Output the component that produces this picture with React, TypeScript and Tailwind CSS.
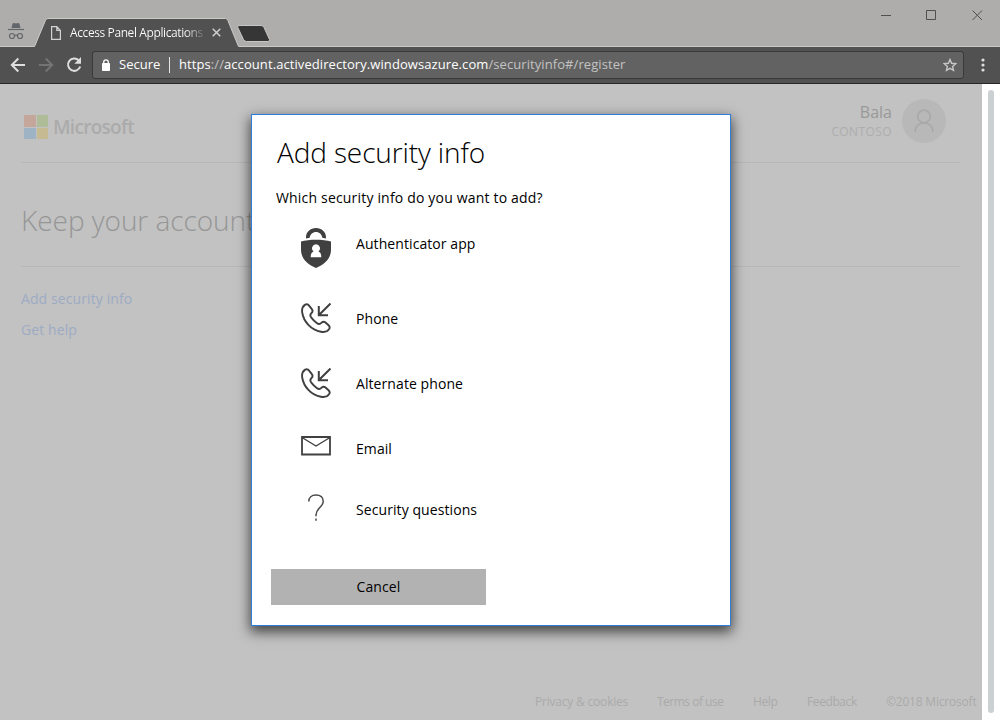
import type { ReactNode } from "react";

function IncognitoIcon() {
  return (
    <svg className="mt-[23px] h-[17px] w-4 shrink-0" viewBox="0 0 16 17" fill="none">
      <path d="M3.5 5 4.6.6 6 0l2 .6L10 0l1.4.6L12.500 5Z" fill="#62656a" />
      <path d="M0 6.500h16" stroke="#62656a" strokeWidth="1.200" />
      <circle cx="4" cy="13" r="2.500" stroke="#62656a" strokeWidth="1.200" />
      <circle cx="12" cy="13" r="2.500" stroke="#62656a" strokeWidth="1.200" />
      <path d="M6.500 12.600q1.500-1 3 0" stroke="#62656a" strokeWidth="1.200" />
    </svg>
  );
}

function TitleBar() {
  return (
    <header className="relative flex h-[47px] border-b border-[#c9c9c8] bg-[#aeadab] pl-2">
      <IncognitoIcon />
      <div className="relative ml-[10px] mt-[18px] h-[29px] w-[205px] shrink-0">
        <svg className="absolute inset-0" width="205" height="29" viewBox="0 0 205 29">
          <path d="M0 29 .8 28.500 11.500 2.300Q12.300.5 14 .5H191.500Q193 .5 193.800 2.300L204.500 28.500 205 29Z" fill="#515151" />
          <path d="M.5 28.500 11.500 2.300Q12.300.5 14 .5H191.500Q193 .5 193.800 2.300L204.500 28.500" fill="none" stroke="#c9c9c8" />
        </svg>
        <div className="relative flex h-full items-center pl-[17px]">
          <svg width="10" height="14" viewBox="0 0 10 14" fill="none" stroke="#d2d2d2" strokeWidth="1.200">
            <path d="M.6.6h5.200l3.600 3.800v9H.6Z M5.800.6v3.800h3.600" />
          </svg>
          <span className="ml-[9px] w-[136px] shrink-0 whitespace-nowrap bg-linear-to-r from-white from-85% to-[#5a5a5a] bg-clip-text text-[12px] tracking-[-0.4px] text-transparent">
            Access Panel Applications
          </span>
          <svg className="ml-[6px]" width="9" height="9" viewBox="0 0 9 9" stroke="#d0d0d0" strokeWidth="1.500">
            <path d="m.7.7 7.600 7.600M8.300.7.7 8.300" />
          </svg>
        </div>
      </div>
      <svg className="-ml-[2px] mt-[24px] shrink-0" width="34" height="19" viewBox="0 0 34 19">
        <path d="M2 1.500H24Q26 1.500 27 3.500L32.500 15.500Q33 17.500 31 17.500H9.500Q7.500 17.500 6.500 15.500L.8 3.500Q.3 1.500 2 1.500Z" fill="#363636" stroke="#c6c6c5" />
      </svg>
      <div className="ml-auto flex gap-[35px] pr-[17px] pt-[10px]">
        <svg width="10" height="11" viewBox="0 0 10 11" stroke="#51504f"><path d="M0 5.500h10" /></svg>
        <svg width="11" height="11" viewBox="0 0 11 11" fill="none" stroke="#51504f"><path d="M.5.5h9v9h-9Z" /></svg>
        <svg width="11" height="11" viewBox="0 0 11 11" stroke="#51504f"><path d="m.5.5 9.500 9.500M10 .5.5 10" /></svg>
      </div>
    </header>
  );
}

function Toolbar() {
  return (
    <div className="flex h-[37px] items-center border-b border-[#282828] bg-[#515151] pl-[10px]">
      <svg width="16" height="16" viewBox="0 0 16 16" fill="none" stroke="#dedede" strokeWidth="2">
        <path d="M15 8H2M8.300 1.500 1.800 8l6.500 6.500" />
      </svg>
      <svg className="ml-3" width="16" height="16" viewBox="0 0 16 16" fill="none" stroke="#747474" strokeWidth="2">
        <path d="M1 8h13M7.700 1.500 14.200 8l-6.500 6.500" />
      </svg>
      <svg className="ml-3" width="16" height="16" viewBox="0 0 16 16" fill="none">
        <path d="M12.800 3.400A6.200 6.200 0 1 0 14.200 9.500" stroke="#dedede" strokeWidth="2" />
        <path d="M15 0v6.700H8.300Z" fill="#dedede" />
      </svg>
      <div className="ml-[10px] flex h-[28px] w-[872px] items-center rounded-[3px] border border-[#393939] bg-[#626262] pl-2 text-[13px] text-white">
        <svg width="10" height="12" viewBox="0 0 10 12" fill="none">
          <rect x="1" y="4" width="8" height="8" rx=".8" fill="#fff" />
          <path d="M2.700 5V3.200a2.300 2.300 0 0 1 4.600 0V5" stroke="#fff" strokeWidth="1.300" />
        </svg>
        <span className="ml-2 w-[42px] whitespace-nowrap">Secure</span>
        <span className="ml-[8px] h-4 w-px bg-[#e6e6e6]" />
        <span className="ml-[9px] whitespace-nowrap tracking-[0.08px] text-[#c2c2c2]">
          <span className="text-white">https</span>://<span className="text-white">account.activedirectory.windowsazure.com</span>/securityinfo#/register
        </span>
        <svg className="ml-auto mr-[6px]" width="14" height="14" viewBox="0 0 14 14" fill="none" stroke="#c6c6c6" strokeWidth="1.400">
          <path d="m7 1.500 1.600 3.800 4.100.4-3.100 2.700.9 4L7 10.300l-3.500 2.100.9-4L1.300 5.700l4.100-.4Z" />
        </svg>
      </div>
      <svg className="ml-[16.500px]" width="4" height="14" viewBox="0 0 4 14" fill="#dedede">
        <circle cx="2" cy="2" r="1.600" /><circle cx="2" cy="7" r="1.600" /><circle cx="2" cy="12" r="1.600" />
      </svg>
    </div>
  );
}

function PageContent() {
  return (
    <div className="flex w-[982px] flex-col bg-[#c2c2c2]">
      <div className="ml-[21px] mr-[22px] flex h-[79px] border-b border-[#b7b7b7]">
        <div className="mt-[30px] flex h-[26px] w-[115px] items-center pl-[3px]">
          <div className="grid shrink-0 grid-cols-2 gap-px">
            <span className="size-[11.500px] bg-[#c5a69b]" />
            <span className="size-[11.500px] bg-[#afbc98]" />
            <span className="size-[11.500px] bg-[#9eb3c3]" />
            <span className="size-[11.500px] bg-[#c6ba92]" />
          </div>
          <span className="ml-[5px] text-[19px] font-semibold tracking-[-0.7px] text-[#ababab]">Microsoft</span>
        </div>
        <div className="ml-auto mr-[14px] mt-[15px] flex">
          <div className="mr-[10px] flex flex-col items-end">
            <span className="mt-[2px] h-[22px] text-[16px] leading-[22px] text-[#999]">Bala</span>
            <span className="h-4 text-[12px] leading-[18px] tracking-[0.4px] text-[#adadad]">CONTOSO</span>
          </div>
          <div className="flex size-11 items-center justify-center rounded-full bg-[#b8b8b8]">
            <svg width="20" height="24" viewBox="0 0 20 24" fill="none" stroke="#a9a9a9" strokeWidth="1.700">
              <circle cx="10" cy="7.500" r="6.300" />
              <path d="M1 23c0-5.500 4-9.200 9-9.200s9 3.700 9 9.200" />
            </svg>
          </div>
        </div>
      </div>
      <div className="ml-[21px] mr-[22px] h-[104px] border-b border-[#b7b7b7] pt-[37px]">
        <h1 className="whitespace-nowrap text-[28px] font-light leading-10 tracking-[-0.05px] text-[#969696]">Keep your account secure</h1>
      </div>
      <nav className="ml-[21px] mt-[22px] flex flex-col gap-[11px] text-[14px] leading-5 tracking-[0.1px] text-[#9dabc4]">
        <span>Add security info</span>
        <span>Get help</span>
      </nav>
      <footer className="mb-[9px] mt-auto flex gap-[29px] whitespace-nowrap pl-[535px] text-[12px] leading-[18px] text-[#aaa]">
        <span className="w-[93px] tracking-[-0.2px]">Privacy &amp; cookies</span>
        <span className="w-[67px] tracking-[-0.5px]">Terms of use</span>
        <span className="w-[25px] tracking-[-0.4px]">Help</span>
        <span className="w-[50px] tracking-[-0.4px]">Feedback</span>
        <span className="w-[91px] tracking-[-0.2px]">©2018 Microsoft</span>
      </footer>
    </div>
  );
}

function AuthenticatorIcon() {
  return (
    <svg width="30" height="40" viewBox="0 0 30 40" fill="#404040">
      <path d="M5 10.500V9.200C5 4 9.400 0 15 0s10 4 10 9.200v1.300L21.300 9.800C20.900 6.400 18.300 4 15 4S9.100 6.400 8.700 9.800Z" />
      <path fillRule="evenodd" d="M0 13.500C8 11 22 11 30 13.500V22c0 8.500-6.500 14.500-15 18C6.500 36.500 0 30.500 0 22ZM15 16.300a4 4 0 0 0-2.500 7.100c-2 .8-2.800 2.500-2.800 5.900h10.600c0-3.400-.8-5.100-2.800-5.900A4 4 0 0 0 15 16.300Z" />
    </svg>
  );
}

function PhoneIcon() {
  return (
    <svg width="30" height="30" viewBox="0 0 30 30" fill="none" stroke="#404040" strokeWidth="2">
      <path d="M29.500.5 18.200 11.800M17.800 3v9.200H27" />
      <path strokeWidth="1.900" strokeLinejoin="round" d="M4.200 1.600C1.500 3.300.7 6.200 1.200 9.500 2.600 18.500 10 27 20 28.800c3.500.6 6.700-.1 8.300-2.900.8-1.400.3-2.700-1-3.900l-2.800-2.500c-1.200-1.100-2.700-1-3.900.2-1.800 1.900-3 1.700-4.900.2a31 31 0 0 1-5.600-5.600c-1.200-1.700-1.100-2.900.4-4.300 1.300-1.200 1.400-2.500.3-3.900L8.300 2.900C7.200 1.300 5.700.8 4.200 1.600Z" />
    </svg>
  );
}

function EmailIcon() {
  return (
    <svg width="30" height="20" viewBox="0 0 30 20" fill="none" stroke="#404040" strokeWidth="1.800">
      <path d="M1 1h28v17.500H1Z" />
      <path strokeWidth="1.400" d="m1 1.500 14 8.500L29 1.500" />
    </svg>
  );
}

function QuestionIcon() {
  return (
    <svg width="16" height="28" viewBox="0 0 16 28" fill="none" stroke="#484848" strokeWidth="1.500">
      <path d="M.8 8.500C.8 4.500 3.600 1.900 8 1.900s7.200 2.600 7.200 6.300c0 3-1.600 4.600-3.800 6.800-2.400 2.500-3.400 4-3.400 6.900v1.300M8 25.500V27.700" />
    </svg>
  );
}

type OptionProps = { icon: ReactNode; label: string; row?: string; iconPlace: string };

function Option({ icon, label, row = "", iconPlace }: OptionProps) {
  return (
    <li className={"flex h-11 items-center " + row}>
      <span className={"flex w-[30px] justify-center " + iconPlace}>{icon}</span>
      <span className="ml-[25px] pb-[2px] tracking-[0.08px]">{label}</span>
    </li>
  );
}

function SecurityDialog() {
  return (
    <section role="dialog" className="absolute left-[251px] top-[114px] flex h-[512px] w-[480px] flex-col border border-[#2f7cdb] bg-white shadow-[0_5px_12px_1px_rgba(0,0,0,0.65)]">
      <h2 className="ml-[25px] mt-[17px] whitespace-nowrap text-[28px] font-light leading-10 tracking-[-0.12px] text-black">Add security info</h2>
      <p className="ml-[24px] mt-[16px] whitespace-nowrap text-[14px] leading-5 tracking-[0.18px] text-black">Which security info do you want to add?</p>
      <ul className="ml-[49px] mt-[14px] text-[14px] text-black">
        <Option icon={<AuthenticatorIcon />} label="Authenticator app" iconPlace="pt-2" />
        <Option icon={<PhoneIcon />} label="Phone" row="mt-[31px]" iconPlace="pb-[2px]" />
        <Option icon={<PhoneIcon />} label="Alternate phone" row="mt-[21px]" iconPlace="pb-[2px]" />
        <Option icon={<EmailIcon />} label="Email" row="mt-[21px]" iconPlace="pb-[6px]" />
        <Option icon={<QuestionIcon />} label="Security questions" row="mt-[17px]" iconPlace="pb-[6px]" />
      </ul>
      <button className="ml-[19px] mt-[37px] h-9 w-[215px] bg-[#b2b2b2] pb-[2px] text-[14px] tracking-[0.1px] text-black">Cancel</button>
    </section>
  );
}

export default function App() {
  return (
    <div className="relative flex h-[720px] w-[1000px] flex-col overflow-hidden bg-white font-['Open_Sans','Noto_Sans',sans-serif]">
      <TitleBar />
      <Toolbar />
      <main className="flex flex-1">
        <PageContent />
        <div className="ml-[6px] mt-[6px] h-[623px] w-[6px] rounded-full bg-[#cbd0d3]" />
      </main>
      <SecurityDialog />
    </div>
  );
}
